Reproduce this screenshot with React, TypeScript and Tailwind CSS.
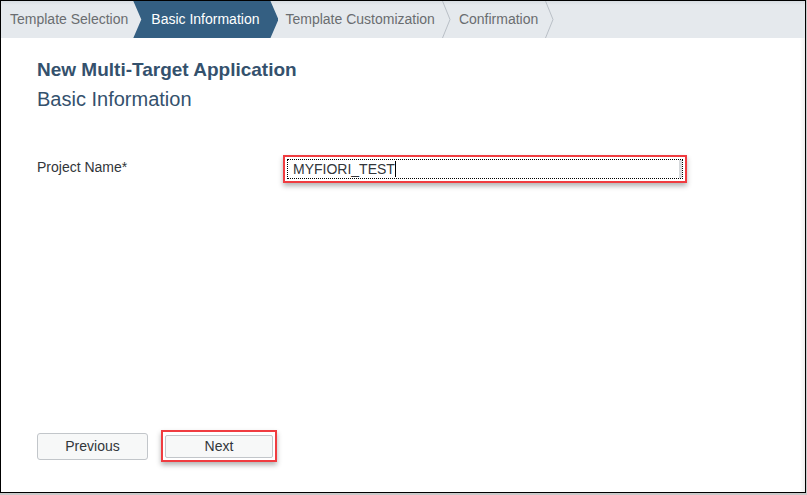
import React from 'react';

const Chevron: React.FC = () => (
  <svg width="9" height="37" viewBox="0 0 9 37" className="shrink-0">
    <polyline points="0.5,0 8,18.5 0.5,37" fill="none" stroke="#b9bfc6" strokeWidth="1" />
  </svg>
);

export default function App() {
  return (
    <div className="w-[807px] h-[495px] bg-[#c9c9c9] font-['Liberation_Sans',Arial,sans-serif]">
      <div className="w-[806px] h-[493px] border border-black bg-white flex flex-col relative">
        {/* wizard steps */}
        <div className="h-[37px] shrink-0 flex items-stretch bg-[linear-gradient(#d7dde3,#e5e9ed_4px,#e5e9ed)] text-[14px]">
          <div className="flex items-center pl-[9px] pr-[5px] text-[#6a6d70]">Template Selection</div>
          <div className="flex items-center pl-[18px] pr-[19px] bg-[#345f82] text-white [clip-path:polygon(0_0,calc(100%_-_8px)_0,100%_50%,calc(100%_-_8px)_100%,0_100%,8px_50%)]">
            Basic Information
          </div>
          <div className="flex items-center pl-[7px] pr-[7px] text-[#6a6d70]">Template Customization</div>
          <Chevron />
          <div className="flex items-center pl-[8px] pr-[7px] text-[#6a6d70]">Confirmation</div>
          <Chevron />
        </div>

        <div className="flex-1 flex flex-col px-[36px]">
          <h1 className="mt-[21px] text-[19px] leading-[22px] font-bold text-[#34516d]">New Multi-Target Application</h1>
          <h2 className="mt-[6px] text-[20px] leading-[24px] text-[#34516d]">Basic Information</h2>

          <div className="mt-[44px] flex items-start">
            <label className="w-[246px] shrink-0 pt-[3px] leading-[18px] text-[14px] text-[#32363a]">Project Name*</label>
            <div className="w-[404px] h-[28px] border-2 border-[#f03c40] p-[2px] shadow-[0_3px_5px_rgba(0,0,0,0.3)] bg-white">
              <div className="h-full border border-dotted border-black bg-white flex items-center pl-[5px] pr-[3px] text-[14px] text-[#32363a] shadow-[inset_-3px_0_0_#d6d9dc]">
                MYFIORI_TEST<span className="w-px h-[16px] bg-black" />
              </div>
            </div>
          </div>

          <div className="flex-1" />

          <div className="mb-[30px] flex items-center gap-[13px]">
            <button className="w-[111px] h-[27px] rounded-[3px] border border-[#c2c6ca] bg-[#f7f8f8] text-[14px] text-[#32363a]">
              Previous
            </button>
            <div className="border-2 border-[#f03c40] p-[2px] bg-white shadow-[0_3px_5px_rgba(0,0,0,0.3)]">
              <button className="w-[108px] h-[23px] rounded-[2px] border border-[#c2c6ca] bg-[#f7f8f8] text-[14px] text-[#32363a]">
                Next
              </button>
            </div>
          </div>
        </div>
        <div className="absolute right-0 top-[37px] bottom-0 w-[5px] bg-[linear-gradient(90deg,transparent,#eeeeee)]" />
      </div>
    </div>
  );
}
